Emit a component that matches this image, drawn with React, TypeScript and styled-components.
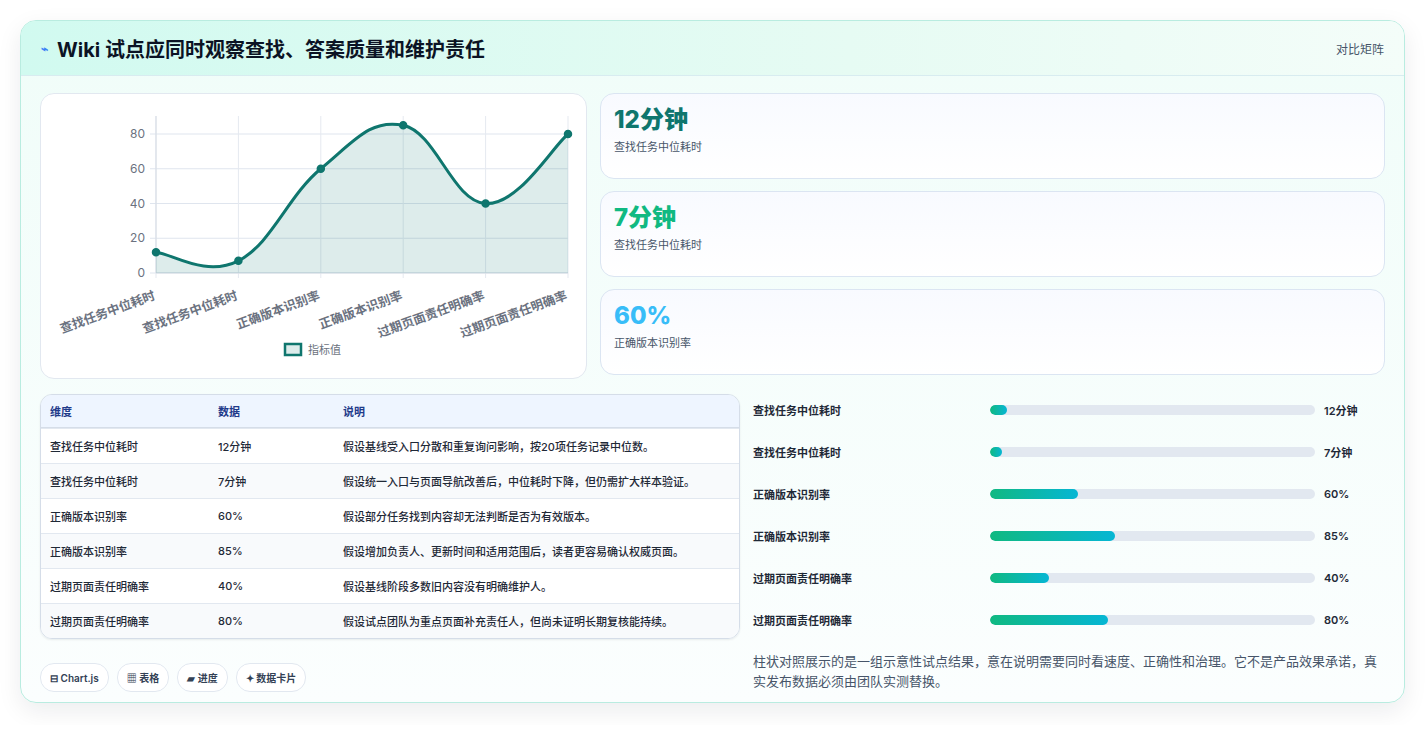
import React from 'react';
import styled, { createGlobalStyle } from 'styled-components';

const GlobalStyle = createGlobalStyle`
  body {
    margin: 0;
    background: #ffffff;
    font-family: Inter, "Noto Sans CJK SC", sans-serif;
    color: #0f172a;
  }
`;

const Page = styled.div`
  padding: 20px 21px 22px 20px;
`;

const Shell = styled.div`
  border: 1px solid #b9ece0;
  border-radius: 16px;
  background: linear-gradient(180deg, #f0fdf9 0%, #fbfefe 100%);
  box-shadow: 0 8px 24px rgba(15, 23, 42, 0.08);
  overflow: hidden;
`;

const Header = styled.div`
  height: 54px;
  display: flex;
  align-items: center;
  justify-content: space-between;
  padding: 0 20px;
  background: linear-gradient(90deg, #d1faf0 0%, #e6fbf3 60%, #f4fdf9 100%);
  border-bottom: 1px solid #d8ecf0;
`;

const Title = styled.h1`
  margin: 0;
  font-size: 20px;
  font-weight: 700;
  color: #0b1324;
  display: flex;
  align-items: center;
  gap: 9px;
`;

const Spark = styled.span`
  color: #3b82f6;
  font-size: 12px;
`;

const HeaderTag = styled.span`
  font-size: 12px;
  color: #475569;
`;

const Body = styled.div`
  padding: 17px 19px 10px 19px;
  display: flex;
  flex-direction: column;
  gap: 15px;
`;

const TopGrid = styled.div`
  display: grid;
  grid-template-columns: 547px 1fr;
  gap: 13px;
`;

const Panel = styled.div`
  background: #fff;
  border: 1px solid #e2e8f0;
  border-radius: 14px;
`;

const ChartPanel = styled(Panel)`
  height: 284px;
`;

const Stats = styled.div`
  display: flex;
  flex-direction: column;
  gap: 12px;
`;

const StatCard = styled.div`
  height: 86px;
  box-sizing: border-box;
  border: 1px solid #dbe5f2;
  border-radius: 14px;
  background: linear-gradient(180deg, #f8faff 0%, #ffffff 100%);
  padding: 12px 13px;
`;

const StatValue = styled.div<{ $color: string }>`
  font-size: 24px;
  font-weight: 800;
  line-height: 28px;
  color: ${(p) => p.$color};
`;

const StatLabel = styled.div`
  font-size: 11px;
  color: #475569;
  margin-top: 4px;
`;

const BottomGrid = styled.div`
  display: grid;
  grid-template-columns: 700px 1fr;
  gap: 13px;
`;

const LeftCol = styled.div`
  display: flex;
  flex-direction: column;
  gap: 24px;
`;

const Table = styled.table`
  width: 100%;
  border-collapse: separate;
  border-spacing: 0;
  border: 1px solid #d5dde8;
  border-radius: 12px;
  overflow: hidden;
  font-size: 11px;
  box-shadow: 0 1px 2px rgba(15, 23, 42, 0.08);
`;

const Th = styled.th`
  text-align: left;
  font-weight: 600;
  color: #1e3a8a;
  background: #eef5ff;
  height: 32px;
  padding: 0 9px;
  border-bottom: 1px solid #d5dde8;
`;

const Td = styled.td<{ $alt?: boolean }>`
  height: 34px;
  padding: 0 9px;
  color: #1f2937;
  font-weight: 500;
  background: ${(p) => (p.$alt ? '#f8fafc' : '#ffffff')};
  border-top: 1px solid #e2e8f0;
`;

const Chips = styled.div`
  display: flex;
  gap: 8px;
`;

const Chip = styled.span`
  display: inline-flex;
  align-items: center;
  gap: 4px;
  height: 27px;
  padding: 0 9px;
  border: 1px solid #e2e8f0;
  border-radius: 14px;
  background: #fff;
  font-size: 10px;
  font-weight: 600;
  color: #334155;
`;

const RightCol = styled.div`
  display: flex;
  flex-direction: column;
  gap: 10px;
`;

const BarRow = styled.div`
  display: grid;
  grid-template-columns: 228px 325px 1fr;
  align-items: center;
  column-gap: 9px;
  height: 32px;
  font-size: 11px;
  font-weight: 600;
  color: #1f2937;
`;

const Track = styled.div`
  height: 10px;
  border-radius: 5px;
  background: #e2e8f0;
  overflow: hidden;
`;

const Fill = styled.div`
  height: 100%;
  border-radius: 5px;
  background: linear-gradient(90deg, #10b981, #06b6d4);
`;

const Note = styled.p`
  margin: 5px 0 0 0;
  font-size: 13px;
  line-height: 20px;
  color: #475569;
`;

const rows = [
  { k: '查找任务中位耗时', v: '12分钟', d: '假设基线受入口分散和重复询问影响，按20项任务记录中位数。', n: 12, w: 5.2 },
  { k: '查找任务中位耗时', v: '7分钟', d: '假设统一入口与页面导航改善后，中位耗时下降，但仍需扩大样本验证。', n: 7, w: 3.6 },
  { k: '正确版本识别率', v: '60%', d: '假设部分任务找到内容却无法判断是否为有效版本。', n: 60, w: 27 },
  { k: '正确版本识别率', v: '85%', d: '假设增加负责人、更新时间和适用范围后，读者更容易确认权威页面。', n: 85, w: 38.5 },
  { k: '过期页面责任明确率', v: '40%', d: '假设基线阶段多数旧内容没有明确维护人。', n: 40, w: 18 },
  { k: '过期页面责任明确率', v: '80%', d: '假设试点团队为重点页面补充责任人，但尚未证明长期复核能持续。', n: 80, w: 36.2 },
];

const X0 = 115;
const STEP = 82.4;
const Y0 = 179;
const SCALE = 1.7375;

const pts = rows.map((r, i) => [X0 + i * STEP, Y0 - r.n * SCALE]);

const curvePath = () => {
  let d = `M${pts[0][0]},${pts[0][1]}`;
  for (let i = 0; i < pts.length - 1; i++) {
    const p0 = pts[i - 1] || pts[i];
    const p1 = pts[i];
    const p2 = pts[i + 1];
    const p3 = pts[i + 2] || p2;
    const t = 0.2;
    const c1 = [p1[0] + (p2[0] - p0[0]) * t, p1[1] + (p2[1] - p0[1]) * t];
    const c2 = [p2[0] - (p3[0] - p1[0]) * t, p2[1] - (p3[1] - p1[1]) * t];
    d += ` C${c1[0]},${c1[1]} ${c2[0]},${c2[1]} ${p2[0]},${p2[1]}`;
  }
  return d;
};

const LineChart = () => {
  const line = curvePath();
  const last = pts[pts.length - 1];
  const area = `${line} L${last[0]},${Y0} L${X0},${Y0} Z`;
  return (
    <svg width="546" height="284" fontFamily="Inter, 'Noto Sans CJK SC', sans-serif">
      {[0, 20, 40, 60, 80].map((v) => (
        <g key={v}>
          <line x1={X0 - 6} x2={527} y1={Y0 - v * SCALE} y2={Y0 - v * SCALE} stroke="#dfe5ee" />
          <text x={X0 - 11} y={Y0 - v * SCALE + 4} fontSize="12" fill="#6b7280" textAnchor="end">{v}</text>
        </g>
      ))}
      {pts.map(([x], i) => (
        <line key={i} x1={x} x2={x} y1={22} y2={Y0 + 5} stroke="#e5e9f0" />
      ))}
      <line x1={X0} x2={X0} y1={22} y2={Y0} stroke="#d5dbe4" />
      <line x1={X0} x2={527} y1={Y0} y2={Y0} stroke="#d5dbe4" />
      <path d={area} fill="rgba(15,118,110,0.14)" />
      <path d={line} fill="none" stroke="#0f766e" strokeWidth="3" />
      {pts.map(([x, y], i) => (
        <circle key={i} cx={x} cy={y} r="3.5" fill="#0f766e" stroke="#0f766e" strokeWidth="1.5" />
      ))}
      {rows.map((r, i) => (
        <text
          key={i}
          x={X0 + i * STEP}
          y={Y0 + 26}
          fontSize="12.5"
          fontWeight="600"
          fill="#6b7280"
          textAnchor="end"
          transform={`rotate(-20 ${X0 + i * STEP} ${Y0 + 26})`}
        >
          {r.k}
        </text>
      ))}
      <rect x="244" y="250" width="16" height="11" fill="rgba(15,118,110,0.14)" stroke="#0f766e" strokeWidth="2.5" />
      <text x="267" y="260" fontSize="11" fill="#6b7280">指标值</text>
    </svg>
  );
};

export default function App() {
  return (
    <Page>
      <GlobalStyle />
      <Shell>
        <Header>
          <Title>
            <Spark>⌁</Spark>
            Wiki 试点应同时观察查找、答案质量和维护责任
          </Title>
          <HeaderTag>对比矩阵</HeaderTag>
        </Header>
        <Body>
          <TopGrid>
            <ChartPanel>
              <LineChart />
            </ChartPanel>
            <Stats>
              <StatCard>
                <StatValue $color="#0f766e">12分钟</StatValue>
                <StatLabel>查找任务中位耗时</StatLabel>
              </StatCard>
              <StatCard>
                <StatValue $color="#10b981">7分钟</StatValue>
                <StatLabel>查找任务中位耗时</StatLabel>
              </StatCard>
              <StatCard>
                <StatValue $color="#38bdf8">60%</StatValue>
                <StatLabel>正确版本识别率</StatLabel>
              </StatCard>
            </Stats>
          </TopGrid>
          <BottomGrid>
            <LeftCol>
              <Table>
                <thead>
                  <tr>
                    <Th style={{ width: 150 }}>维度</Th>
                    <Th style={{ width: 107 }}>数据</Th>
                    <Th>说明</Th>
                  </tr>
                </thead>
                <tbody>
                  {rows.map((r, i) => (
                    <tr key={i}>
                      <Td $alt={i % 2 === 1}>{r.k}</Td>
                      <Td $alt={i % 2 === 1}>{r.v}</Td>
                      <Td $alt={i % 2 === 1}>{r.d}</Td>
                    </tr>
                  ))}
                </tbody>
              </Table>
              <Chips>
                <Chip>⊟ Chart.js</Chip>
                <Chip>▦ 表格</Chip>
                <Chip>▰ 进度</Chip>
                <Chip>✦ 数据卡片</Chip>
              </Chips>
            </LeftCol>
            <RightCol>
              {rows.map((r, i) => (
                <BarRow key={i}>
                  <span>{r.k}</span>
                  <Track>
                    <Fill style={{ width: `${r.w}%` }} />
                  </Track>
                  <span>{r.v}</span>
                </BarRow>
              ))}
              <Note>柱状对照展示的是一组示意性试点结果，意在说明需要同时看速度、正确性和治理。它不是产品效果承诺，真实发布数据必须由团队实测替换。</Note>
            </RightCol>
          </BottomGrid>
        </Body>
      </Shell>
    </Page>
  );
}
